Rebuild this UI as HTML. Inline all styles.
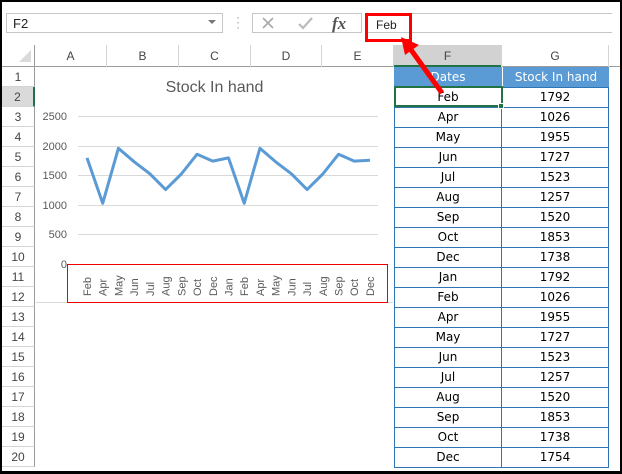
<!DOCTYPE html><html><head><style>
*{margin:0;padding:0;box-sizing:border-box}
body{width:622px;height:474px;overflow:hidden;background:#fff;font-family:"Liberation Sans",sans-serif;position:relative}
.a{position:absolute}
.t{font-family:"DejaVu Sans",sans-serif;font-size:12px;color:#000;text-align:center}
</style></head><body>
<div class="a" style="left:0;top:0;width:622px;height:474px;border:2px solid #000;border-bottom-width:3px"></div>
<div class="a" style="left:6px;top:13px;width:217px;height:20px;border:1px solid #c6c6c6"></div>
<div class="a" style="left:13px;top:16px;font-size:13px;color:#222">F2</div>
<div class="a" style="left:208px;top:20px;width:0;height:0;border-left:4px solid transparent;border-right:4px solid transparent;border-top:4px solid #777"></div>
<div class="a" style="left:236px;top:15px;color:#999;font-size:12px;line-height:5px">·<br>·<br>·</div>
<div class="a" style="left:252px;top:13px;width:110px;height:20px;border:1px solid #c6c6c6"></div>
<svg class="a" style="left:252px;top:13px" width="110" height="20"><path d="M11 5l10 10M21 5L11 15" stroke="#aaa" stroke-width="1.6"/><path d="M47 11l4 4 9-10" stroke="#bbb" stroke-width="2.2" fill="none"/><text x="80" y="16" font-family="Liberation Serif" font-style="italic" font-size="17" fill="#555" font-weight="bold">fx</text></svg>
<div class="a" style="left:366px;top:13px;width:246px;height:20px;border-top:1px solid #c6c6c6;border-bottom:1px solid #c6c6c6"></div>
<div class="a" style="left:365px;top:13px;width:47px;height:29px;border:3px solid #f00"></div>
<div class="a" style="left:376px;top:18px;font-size:12px;color:#222">Feb</div>
<div class="a" style="left:2px;top:45px;width:618px;height:22px;background:#fff;border-bottom:1px solid #9c9c9c"></div>
<div class="a" style="left:2px;top:45px;width:33px;height:422px;border-right:1px solid #9c9c9c"></div>
<svg class="a" style="left:18px;top:49px" width="14" height="14"><path d="M13 1V13H1Z" fill="#dadada"/></svg>
<div class="a" style="left:394px;top:45px;width:108px;height:22px;background:#d2d2d2;border-bottom:2px solid #217346"></div>
<div id="cols"></div>
<div id="rows"></div>
<div class="a" style="left:36px;top:68px;width:357px;height:235px;background:#fff;border-bottom:1px solid #d9d9d9"></div>
<div class="a" style="left:36px;top:79px;width:357px;text-align:center;font-size:16px;color:#595959">Stock In hand</div>
<svg class="a" style="left:36px;top:68px" width="357" height="240">
<g stroke="#d9d9d9" stroke-width="1"><path d="M42 48.5H342M42 78.5H342M42 107.5H342M42 137.5H342M42 166.5H342M42 196.5H342"/></g>
<g font-family="Liberation Sans" font-size="11" fill="#595959" text-anchor="end"><text x="31" y="52">2500</text><text x="31" y="82">2000</text><text x="31" y="111">1500</text><text x="31" y="141">1000</text><text x="31" y="170">500</text><text x="31" y="200">0</text></g>
<polyline id="pl" fill="none" stroke="#5b9bd5" stroke-width="3" stroke-linejoin="round"/>
<g id="lb" font-family="Liberation Sans" font-size="11" fill="#595959"></g>
<rect x="31.5" y="196.5" width="320" height="38" fill="none" stroke="#e00" stroke-width="1"/>
</svg>
<div id="tbl"></div>
<svg class="a" style="left:395px;top:35px" width="60" height="65"><path d="M47 58L14 12" stroke="#f00" stroke-width="5"/><path d="M6 2L24 10 10 20Z" fill="#f00"/></svg>
<script>
var cols=[["A",35,107],["B",107,179],["C",179,251],["D",251,322],["E",322,394],["F",394,502],["G",502,609]];
var h="";cols.forEach(function(c){h+='<div class="a" style="left:'+c[1]+'px;top:45px;width:'+(c[2]-c[1])+'px;height:22px;border-right:1px solid #d4d4d4;text-align:center;line-height:22px;font-size:12px;color:#444">'+c[0]+'</div>'});
document.getElementById("cols").innerHTML=h;
h="";for(var r=1;r<=20;r++){var y=67+(r-1)*20;h+='<div class="a" style="left:2px;top:'+y+'px;width:33px;height:20px;border-bottom:1px solid #d4d4d4;border-right:'+(r==2?'2px solid #217346':'1px solid #9c9c9c')+';background:'+(r==2?'#dadada':'#fff')+';text-align:center;line-height:20px;font-size:12px;color:#444">'+r+'</div>'}
document.getElementById("rows").innerHTML=h;
var m=["Feb","Apr","May","Jun","Jul","Aug","Sep","Oct","Dec","Jan","Feb","Apr","May","Jun","Jul","Aug","Sep","Oct","Dec"];
var v=[1792,1026,1955,1727,1523,1257,1520,1853,1738,1792,1026,1955,1727,1523,1257,1520,1853,1738,1754];
var p="",l="";for(var i=0;i<19;i++){var x=51+i*15.72;p+=x.toFixed(1)+","+(196-v[i]/2500*148).toFixed(1)+" ";l+='<text transform="translate('+(x+4)+',228) rotate(-90)">'+m[i]+'</text>'}
document.getElementById("pl").setAttribute("points",p);document.getElementById("lb").innerHTML=l;
h='<div class="a" style="left:394px;top:67px;width:215px;height:20px;background:#5b9bd5;color:#fff;font-family:DejaVu Sans,sans-serif;font-size:12px;line-height:20px"><div class="a" style="left:0;width:108px;text-align:center">Dates</div><div class="a" style="left:108px;width:107px;text-align:center;border-left:1px solid #fff">Stock In hand</div></div>';
for(i=0;i<19;i++){var y=87+i*20;h+='<div class="a t" style="left:394px;top:'+y+'px;width:108px;height:21px;border:1px solid #2e75b6;line-height:19px">'+m[i]+'</div><div class="a t" style="left:501px;top:'+y+'px;width:108px;height:21px;border:1px solid #2e75b6;line-height:19px">'+v[i]+'</div>'}
h+='<div class="a" style="left:394px;top:86px;width:109px;height:21px;border:2px solid #217346"></div><div class="a" style="left:498px;top:103px;width:6px;height:6px;background:#217346;border:1px solid #fff"></div>';
document.getElementById("tbl").innerHTML=h;
</script>
</body></html>
